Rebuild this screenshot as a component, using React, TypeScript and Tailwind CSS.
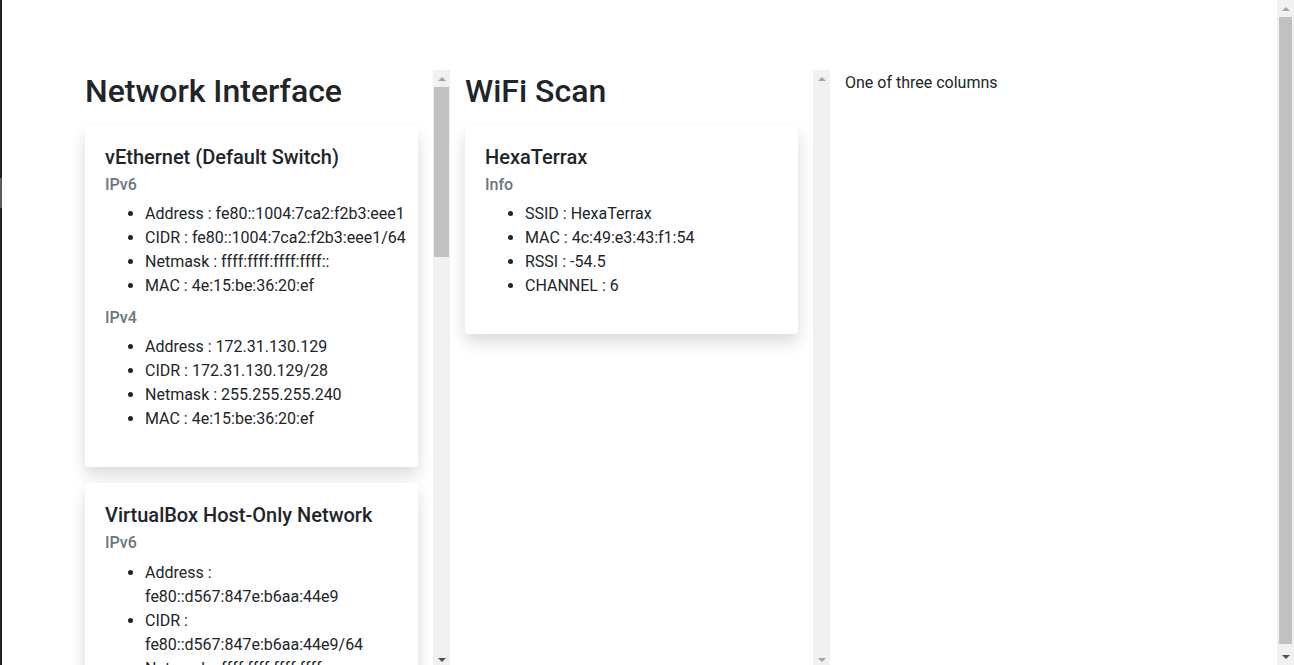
import React from 'react'

type Group = { label: string; rows: [string, string][] }
type Iface = { name: string; nowrap?: boolean; groups: Group[] }

const interfaces: Iface[] = [
  {
    name: 'vEthernet (Default Switch)',
    nowrap: true,
    groups: [
      {
        label: 'IPv6',
        rows: [
          ['Address', 'fe80::1004:7ca2:f2b3:eee1'],
          ['CIDR', 'fe80::1004:7ca2:f2b3:eee1/64'],
          ['Netmask', 'ffff:ffff:ffff:ffff::'],
          ['MAC', '4e:15:be:36:20:ef'],
        ],
      },
      {
        label: 'IPv4',
        rows: [
          ['Address', '172.31.130.129'],
          ['CIDR', '172.31.130.129/28'],
          ['Netmask', '255.255.255.240'],
          ['MAC', '4e:15:be:36:20:ef'],
        ],
      },
    ],
  },
  {
    name: 'VirtualBox Host-Only Network',
    groups: [
      {
        label: 'IPv6',
        rows: [
          ['Address', 'fe80::d567:847e:b6aa:44e9'],
          ['CIDR', 'fe80::d567:847e:b6aa:44e9/64'],
          ['Netmask', 'ffff:ffff:ffff:ffff::'],
          ['MAC', '0a:00:27:00:00:0e'],
        ],
      },
      {
        label: 'IPv4',
        rows: [
          ['Address', '192.168.56.1'],
          ['CIDR', '192.168.56.1/24'],
          ['Netmask', '255.255.255.0'],
          ['MAC', '0a:00:27:00:00:0e'],
        ],
      },
    ],
  },
  {
    name: 'Wi-Fi',
    groups: [
      {
        label: 'IPv6',
        rows: [
          ['Address', 'fe80::5d1c:2a07:9b4e:1f3a'],
          ['CIDR', 'fe80::5d1c:2a07:9b4e:1f3a/64'],
          ['Netmask', 'ffff:ffff:ffff:ffff::'],
          ['MAC', '4c:49:e3:43:f1:53'],
        ],
      },
      {
        label: 'IPv4',
        rows: [
          ['Address', '192.168.1.42'],
          ['CIDR', '192.168.1.42/24'],
          ['Netmask', '255.255.255.0'],
          ['MAC', '4c:49:e3:43:f1:53'],
        ],
      },
    ],
  },
]

const wifi: Iface = {
  name: 'HexaTerrax',
  groups: [
    {
      label: 'Info',
      rows: [
        ['SSID', 'HexaTerrax'],
        ['MAC', '4c:49:e3:43:f1:54'],
        ['RSSI', '-54.5'],
        ['CHANNEL', '6'],
      ],
    },
  ],
}

function Arrow({ down, dark }: { down?: boolean; dark?: boolean }) {
  return (
    <svg width="8" height="4" viewBox="0 0 8 4" className="block">
      <polygon points={down ? '0,0 8,0 4,4' : '0,4 4,0 8,4'} fill={dark ? '#505050' : '#a3a3a3'} />
    </svg>
  )
}

// classic windows-style scrollbar (the browser's own ones are hidden in the shot)
function Scrollbar({ thumb, inset, downDark }: { thumb?: number; inset: 'narrow' | 'wide'; downDark?: boolean }) {
  return (
    <div className="flex w-[17px] shrink-0 flex-col bg-[#f1f1f1]">
      <div className="flex h-[17px] items-center justify-center">
        <Arrow />
      </div>
      <div className={`flex-1 ${inset === 'wide' ? 'px-[2px]' : 'px-[1px]'}`}>
        {thumb ? <div className="bg-[#c1c1c1]" style={{ height: thumb }} /> : null}
      </div>
      <div className="flex h-[17px] items-center justify-center">
        <Arrow down dark={downDark} />
      </div>
    </div>
  )
}

function Card({ iface }: { iface: Iface }) {
  return (
    <div className="mb-4 rounded-[4px] bg-white p-5 shadow-[0_8px_16px_rgba(0,0,0,0.15)]">
      <h5 className="mb-3 text-[20px] font-medium leading-[24px]">{iface.name}</h5>
      {iface.groups.map((g) => (
        <div key={g.label}>
          <h6 className="-mt-1.5 mb-2 text-[16px] font-medium leading-[19.2px] text-[#6c757d]">{g.label}</h6>
          <ul className="mb-4 list-disc pl-10">
            {g.rows.map(([k, v]) => (
              <li key={k} className={iface.nowrap ? 'whitespace-nowrap leading-6' : 'leading-6'}>
                {k} : {v}
              </li>
            ))}
          </ul>
        </div>
      ))}
    </div>
  )
}

export default function App() {
  return (
    <div className="relative flex h-screen bg-white font-['Roboto','Liberation_Sans',sans-serif] text-[16px] text-[#212529]">
      <div className="min-w-0 flex-1 overflow-hidden">
        <div className="flex pl-[70px] pt-[70px]">
          <div className="flex h-[90vh] w-[380px]">
            <div className="min-w-0 flex-1 overflow-hidden px-[15px]">
              <h2 className="mb-[14px] pt-[2px] text-[32px] font-medium leading-[39px]">Network Interface</h2>
              {interfaces.map((i) => (
                <Card key={i.name} iface={i} />
              ))}
            </div>
            <Scrollbar thumb={170} inset="narrow" downDark />
          </div>
          <div className="flex h-[90vh] w-[380px]">
            <div className="min-w-0 flex-1 overflow-hidden px-[15px]">
              <h2 className="mb-[14px] pt-[2px] text-[32px] font-medium leading-[39px]">WiFi Scan</h2>
              <Card iface={wifi} />
            </div>
            <Scrollbar inset="narrow" />
          </div>
          <div className="w-[380px] px-[15px] pt-[1px] leading-6">One of three columns</div>
        </div>
      </div>
      <Scrollbar thumb={627} inset="wide" downDark />
      <div className="pointer-events-none absolute inset-y-0 left-0 flex w-[2px] flex-col">
        <div className="h-[178px] bg-[#1f1f1f]" />
        <div className="h-[30px] bg-[#5c5c5c]" />
        <div className="flex-1 bg-[#1f1f1f]" />
      </div>
    </div>
  )
}
